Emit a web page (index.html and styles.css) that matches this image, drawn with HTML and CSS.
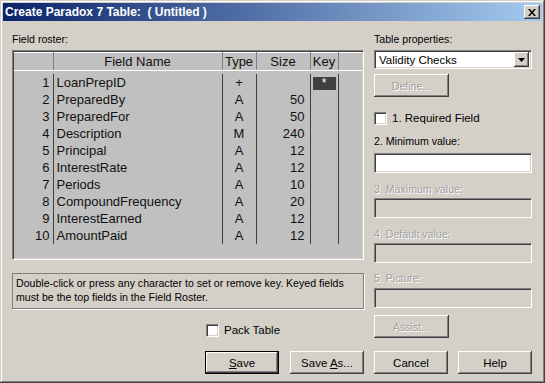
FILE: index.html
```html
<!DOCTYPE html>
<html lang="en">

<head>
    <meta charset="UTF-8">
    <title>Create Paradox 7 Table</title>
    <link rel="stylesheet" href="styles.css">
</head>

<body>
    <div class="window">
        <div class="titlebar">
            <span class="title">Create Paradox 7 Table:&nbsp; ( Untitled )</span>
            <span class="close-btn">
                <svg width="8" height="7" viewBox="0 0 8 7"><path d="M0 0h2l2 2.5L6 0h2L5 3.5 8 7H6L4 4.5 2 7H0l3-3.5z" fill="#000"/></svg>
            </span>
        </div>

        <div class="content">
            <div class="main">
                <!-- 左边 字段列表 -->
                <div class="left">
                    <div class="label">Field roster:</div>
                    <div class="roster">
                        <table class="grid">
                            <colgroup>
                                <col class="c-num">
                                <col class="c-name">
                                <col class="c-type">
                                <col class="c-size">
                                <col class="c-key">
                                <col class="c-rest">
                            </colgroup>
                            <thead>
                                <tr>
                                    <th></th>
                                    <th>Field Name</th>
                                    <th>Type</th>
                                    <th>Size</th>
                                    <th>Key</th>
                                    <th></th>
                                </tr>
                            </thead>
                            <tbody>
                                <tr class="spacer"><td colspan="6"></td></tr>
                                <tr><td class="num">1</td><td>LoanPrepID</td><td class="type">+</td><td class="size"></td><td class="key"><span class="key-on">*</span></td><td class="rest"></td></tr>
                                <tr><td class="num">2</td><td>PreparedBy</td><td class="type">A</td><td class="size">50</td><td class="key"></td><td class="rest"></td></tr>
                                <tr><td class="num">3</td><td>PreparedFor</td><td class="type">A</td><td class="size">50</td><td class="key"></td><td class="rest"></td></tr>
                                <tr><td class="num">4</td><td>Description</td><td class="type">M</td><td class="size">240</td><td class="key"></td><td class="rest"></td></tr>
                                <tr><td class="num">5</td><td>Principal</td><td class="type">A</td><td class="size">12</td><td class="key"></td><td class="rest"></td></tr>
                                <tr><td class="num">6</td><td>InterestRate</td><td class="type">A</td><td class="size">12</td><td class="key"></td><td class="rest"></td></tr>
                                <tr><td class="num">7</td><td>Periods</td><td class="type">A</td><td class="size">10</td><td class="key"></td><td class="rest"></td></tr>
                                <tr><td class="num">8</td><td>CompoundFrequency</td><td class="type">A</td><td class="size">20</td><td class="key"></td><td class="rest"></td></tr>
                                <tr><td class="num">9</td><td>InterestEarned</td><td class="type">A</td><td class="size">12</td><td class="key"></td><td class="rest"></td></tr>
                                <tr><td class="num">10</td><td>AmountPaid</td><td class="type">A</td><td class="size">12</td><td class="key"></td><td class="rest"></td></tr>
                            </tbody>
                        </table>
                    </div>
                    <div class="hint">Double-click or press any character to set or remove key. Keyed fields must be the top fields in the Field Roster.</div>
                    <div class="pack"><span class="check"></span><span>Pack Table</span></div>
                </div>

                <!-- 右边 表属性 -->
                <div class="right">
                    <div class="label">Table properties:</div>
                    <div class="select">
                        <span class="select-text">Validity Checks</span>
                        <span class="drop-btn">
                            <svg width="7" height="4" viewBox="0 0 7 4"><path d="M0 0h7L3.5 4z" fill="#000"/></svg>
                        </span>
                    </div>
                    <div class="btn disabled btn-define"><span>Define...</span></div>
                    <div class="req"><span class="check"></span><span>1. Required Field</span></div>
                    <div class="label lbl-min">2. Minimum value:</div>
                    <div class="field field-min"></div>
                    <div class="label off lbl-max">3. Maximum value:</div>
                    <div class="field off"></div>
                    <div class="label off lbl-def">4. Default value:</div>
                    <div class="field off"></div>
                    <div class="label off lbl-pic">5. Picture:</div>
                    <div class="field off field-pic"></div>
                    <div class="btn disabled btn-assist"><span>Assist...</span></div>
                </div>
            </div>

            <!-- 底部按钮 -->
            <div class="footer">
                <div class="footer-left">
                    <div class="btn default"><span><u>S</u>ave</span></div>
                    <div class="btn"><span>Save <u>A</u>s...</span></div>
                </div>
                <div class="footer-right">
                    <div class="btn"><span>Cancel</span></div>
                    <div class="btn"><span>Help</span></div>
                </div>
            </div>
        </div>
    </div>
</body>

</html>
```

FILE: styles.css
```css
* {
    box-sizing: border-box;
    padding: 0;
    margin: 0;
}

body {
    width: 545px;
    height: 383px;
    overflow: hidden;
    background: #d4d0c8;
    font-family: "Liberation Sans", Arial, sans-serif;
    font-size: 10.6px;
    color: #000;
}

.window {
    width: 545px;
    height: 383px;
    padding: 3px;
    background: #d4d0c8;
    box-shadow: inset -1px -1px #404040, inset 1px 1px #d4d0c8, inset -2px -2px #808080, inset 2px 2px #fff;
}

/* 标题栏 */

.titlebar {
    height: 18px;
    display: flex;
    align-items: center;
    justify-content: space-between;
    padding: 0 2px 0 2px;
    background: linear-gradient(to right, #0a246a, #a6caf0);
}

.title {
    color: #fff;
    font-weight: bold;
    font-size: 12px;
    white-space: pre;
}

.close-btn {
    width: 16px;
    height: 14px;
    display: flex;
    align-items: center;
    justify-content: center;
    background: #d4d0c8;
    box-shadow: inset -1px -1px #404040, inset 1px 1px #fff, inset -2px -2px #808080;
}

/* 内容 */

.content {
    padding: 12px 10px 0 9px;
}

.main {
    display: flex;
    gap: 10px;
}

.left {
    width: 352px;
    display: flex;
    flex-direction: column;
}

.right {
    width: 158px;
    display: flex;
    flex-direction: column;
}

.label {
    height: 13px;
    line-height: 13px;
    white-space: nowrap;
}

.label.off {
    color: #a0a0a0;
    text-shadow: 1px 1px #fff;
}

/* 字段表格 */

.roster {
    margin-top: 4px;
    height: 210px;
    background: #c0c0c0;
    border: 1px solid;
    border-color: #808080 #fff #fff #808080;
    box-shadow: inset 1px 1px #404040, inset -1px -1px #d4d0c8;
    padding: 1px;
}

.grid {
    width: 348px;
    border-collapse: collapse;
    table-layout: fixed;
    font-size: 13px;
    color: #111;
}

.c-num { width: 39px; }
.c-name { width: 169px; }
.c-type { width: 34px; }
.c-size { width: 54px; }
.c-key { width: 28px; }
.c-rest { width: 24px; }

.grid th {
    height: 18px;
    font-weight: normal;
    text-align: center;
    border-left: 1px solid #fff;
    border-right: 1px solid #808080;
    border-top: 1px solid #fff;
    border-bottom: 1px solid #fff;
    line-height: 16px;
}

.grid th:first-child {
    border-left: 0;
}

.grid th:last-child {
    border-right: 0;
}

.grid .spacer td {
    height: 3px;
    padding: 0;
    border: 0;
}

.grid td {
    height: 17px;
    line-height: 17px;
    padding: 0 3px;
    border-right: 1px solid #404040;
    white-space: nowrap;
}

.grid td.rest {
    border-right: 0;
}

.grid td.num {
    text-align: right;
}

.grid td.type {
    text-align: center;
}

.grid td.size {
    text-align: right;
    padding-right: 5px;
}

.grid td.key {
    padding: 0 2px 0 2px;
    vertical-align: top;
}

.key-on {
    display: block;
    height: 13px;
    margin-top: 3px;
    background: #404040;
    color: #fff;
    text-align: center;
    line-height: 12px;
    font-size: 12px;
}

.hint {
    margin-top: 13px;
    height: 36px;
    padding: 2px 3px;
    line-height: 14px;
    border: 1px solid #808080;
    box-shadow: 1px 1px #fff;
}

.pack,
.req {
    display: flex;
    align-items: center;
    height: 13px;
    line-height: 13px;
    white-space: nowrap;
    font-size: 11.5px;
}

.pack {
    margin-top: 15px;
    padding-left: 194px;
}

.check {
    width: 13px;
    height: 13px;
    margin-right: 5px;
    background: #fff;
    border: 1px solid;
    border-color: #808080 #fff #fff #808080;
    box-shadow: inset 1px 1px #404040, inset -1px -1px #d4d0c8;
}

/* 右侧控件 */

.select {
    margin-top: 4px;
    height: 19px;
    display: flex;
    align-items: center;
    justify-content: space-between;
    background: #fff;
    border: 1px solid;
    border-color: #808080 #fff #fff #808080;
    box-shadow: inset 1px 1px #404040, inset -1px -1px #d4d0c8;
    padding: 0 2px 0 4px;
    font-size: 11.5px;
}

.drop-btn {
    width: 15px;
    height: 15px;
    display: flex;
    align-items: center;
    justify-content: center;
    background: #d4d0c8;
    box-shadow: inset -1px -1px #404040, inset 1px 1px #fff, inset -2px -2px #808080;
}

.btn {
    width: 75px;
    height: 23px;
    display: flex;
    align-items: center;
    justify-content: center;
    background: #d4d0c8;
    box-shadow: inset -1px -1px #404040, inset 1px 1px #fff, inset -2px -2px #808080;
    font-size: 11.5px;
    white-space: pre;
}

.btn.disabled {
    color: #a0a0a0;
    text-shadow: 1px 1px #fff;
    font-size: 10.6px;
}

.btn.default {
    border: 1px solid #000;
    box-shadow: inset -1px -1px #404040, inset 1px 1px #fff, inset -2px -2px #808080;
}

.btn-define {
    margin-top: 5px;
}

.req {
    margin-top: 15px;
}

.lbl-min {
    margin-top: 10px;
}

.field {
    margin-top: 2px;
    height: 20px;
    background: #fff;
    border: 1px solid;
    border-color: #808080 #fff #fff #808080;
    box-shadow: inset 1px 1px #404040, inset -1px -1px #d4d0c8;
}

.field.off {
    background: #d4d0c8;
}

.field-min {
    margin-top: 5px;
}

.lbl-max,
.lbl-def {
    margin-top: 10px;
}

.lbl-pic {
    margin-top: 9px;
}

.field-pic {
    margin-top: 3px;
}

.btn-assist {
    margin-top: 7px;
}

/* 底部 */

.footer {
    margin-top: 13px;
    display: flex;
    gap: 10px;
}

.footer-left {
    width: 352px;
    display: flex;
    justify-content: flex-end;
    gap: 11px;
}

.footer-right {
    width: 158px;
    display: flex;
    justify-content: space-between;
}

.footer .btn {
    width: 74px;
}
```
